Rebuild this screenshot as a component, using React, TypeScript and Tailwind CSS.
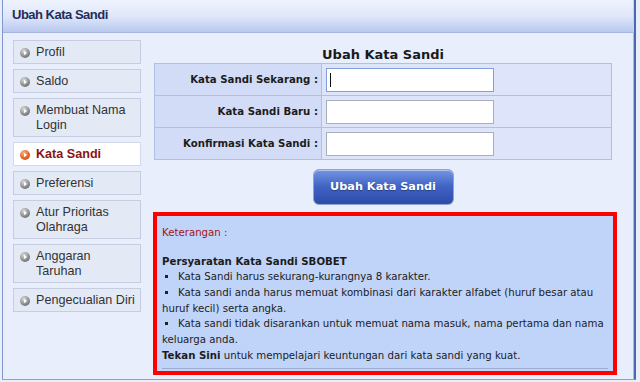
import React from "react";

const Arrow = ({ active }: { active?: boolean }) => {
  const id = active ? "gradActive" : "gradGrey";
  return (
    <svg width="10" height="10" viewBox="0 0 10 10" className="shrink-0 mt-[2.5px]">
      <defs>
        <radialGradient id={id} cx="38%" cy="30%" r="75%">
          <stop offset="0%" stopColor={active ? "#ffb27a" : "#dcdcdc"} />
          <stop offset="100%" stopColor={active ? "#d2470f" : "#6a6a6a"} />
        </radialGradient>
      </defs>
      <circle cx="5" cy="5" r="5" fill={`url(#${id})`} />
      <path d="M4 2.7 L7 5 L4 7.3 Z" fill="#ffffff" />
    </svg>
  );
};

const menu: { label: string[]; active?: boolean }[] = [
  { label: ["Profil"] },
  { label: ["Saldo"] },
  { label: ["Membuat Nama", "Login"] },
  { label: ["Kata Sandi"], active: true },
  { label: ["Preferensi"] },
  { label: ["Atur Prioritas", "Olahraga"] },
  { label: ["Anggaran", "Taruhan"] },
  { label: ["Pengecualian Diri"] },
];

const rows = ["Kata Sandi Sekarang :", "Kata Sandi Baru :", "Konfirmasi Kata Sandi :"];

const Bullet = () => (
  <span className="inline-block w-[3px] h-[3px] bg-[#222] ml-[3px] mr-[10px] align-middle relative top-[-1px]" />
);

export default function App() {
  return (
    <div className="w-[640px] h-[382px] bg-[#e9eefb] overflow-hidden">
      <div className="ml-[2px] w-[634px] h-[380px] border-l border-l-[#8196cb] border-r-2 border-r-[#4b68b4] border-b border-b-[#8ea2d4] flex flex-col bg-[#e8eefc]">
        {/* Header */}
        <div className="h-[33px] shrink-0 flex items-center pl-[9px] pb-[2px] border-b border-b-[#a4b5df] bg-linear-to-b from-[#eef3fd] via-[#dfe7fa] to-[#b9c9ee] border-r border-r-[#c9d3ee]">
          <span className="font-['Liberation_Sans',Arial,sans-serif] font-bold text-[13px] tracking-[-0.5px] text-[#1f2d5c]">
            Ubah Kata Sandi
          </span>
        </div>

        {/* Body */}
        <div className="flex-1 flex pl-[10px] pt-[7px] border-r border-r-[#a9b8df]">
          {/* Sidebar */}
          <div className="w-[128px] shrink-0 flex flex-col gap-[5px] font-['Liberation_Sans',Arial,sans-serif] text-[12.6px]">
            {menu.map((m) => (
              <div
                key={m.label.join(" ")}
                className={`flex items-start gap-[6px] pl-[6px] pr-[4px] py-[4px] border ${
                  m.label.length > 1 ? "leading-[14.5px]" : "leading-[14px]"
                } ${
                  m.active
                    ? "bg-white border-[#d3d9e8] text-[#8a1414] font-bold"
                    : "bg-[#e4e9f6] border-[#c6cde0] text-[#333]"
                }`}
              >
                <Arrow active={m.active} />
                <div>
                  {m.label.map((l) => (
                    <div key={l} className="whitespace-nowrap">
                      {l}
                    </div>
                  ))}
                </div>
              </div>
            ))}
          </div>

          {/* Main */}
          <div className="ml-[12px] w-[464px] pt-[6px] font-['DejaVu_Sans',Verdana,sans-serif] text-[#1c1c1c]">
            <div className="w-[458px] ml-[1px]">
              <div className="h-[17px] leading-[17px] text-center font-bold text-[13px] text-[#1a1a1a]">
                Ubah Kata Sandi
              </div>
              <div className="border-t border-l border-r border-[#b2bfe5]">
                {rows.map((r, i) => (
                  <div key={r} className="h-[32px] flex border-b border-b-[#b2bfe5]">
                    <div className="w-[167px] shrink-0 bg-[#d3dcf7] border-r border-r-[#b2bfe5] flex items-center justify-end pr-[3px] font-bold text-[10.2px] text-[#1c1c1c]">
                      {r}
                    </div>
                    <div className="flex-1 bg-[#dee5fb] flex items-center pl-[4px]">
                      <div className="relative">
                        <input
                          type="password"
                          readOnly
                          className={`block w-[168px] h-[24px] bg-white border outline-none ${
                            i === 0 ? "border-[#7fa0dc]" : "border-[#a9b0bc]"
                          }`}
                        />
                        {i === 0 && (
                          <span className="absolute left-[4px] top-[5px] w-px h-[14px] bg-[#111]" />
                        )}
                      </div>
                    </div>
                  </div>
                ))}
              </div>
              <div className="mt-[9px] flex justify-center">
                <button className="w-[141px] h-[36px] rounded-[6px] border border-[#8fa3d3] bg-linear-to-b from-[#7494e2] via-[#3f62c4] to-[#2d4ca9] text-white font-bold text-[11.3px] shadow-[inset_0_1px_0_rgba(255,255,255,0.45)] [text-shadow:0_1px_1px_rgba(0,0,0,0.35)]">
                  Ubah Kata Sandi
                </button>
              </div>
            </div>

            <div className="mt-[7px] w-[464px] h-[163px] border-4 border-[#ff0000] bg-[#c0d4f9] px-[5px] pb-[2px] text-[10.2px] leading-[15.67px] text-[#1c1c1c]">
              <div className="h-full pt-[9px] border-b border-b-[#9cadd2] whitespace-nowrap">
                <div className="text-[#a01414] mb-[13px]">Keterangan :</div>
                <div className="font-bold">Persyaratan Kata Sandi SBOBET</div>
                <div>
                  <Bullet />
                  Kata Sandi harus sekurang-kurangnya 8 karakter.
                </div>
                <div>
                  <Bullet />
                  Kata sandi anda harus memuat kombinasi dari karakter alfabet (huruf besar atau
                </div>
                <div>huruf kecil) serta angka.</div>
                <div>
                  <Bullet />
                  Kata sandi tidak disarankan untuk memuat nama masuk, nama pertama dan nama
                </div>
                <div>keluarga anda.</div>
                <div>
                  <span className="font-bold">Tekan Sini</span> untuk mempelajari keuntungan dari kata sandi yang kuat.
                </div>
              </div>
            </div>
          </div>
        </div>
      </div>
    </div>
  );
}
